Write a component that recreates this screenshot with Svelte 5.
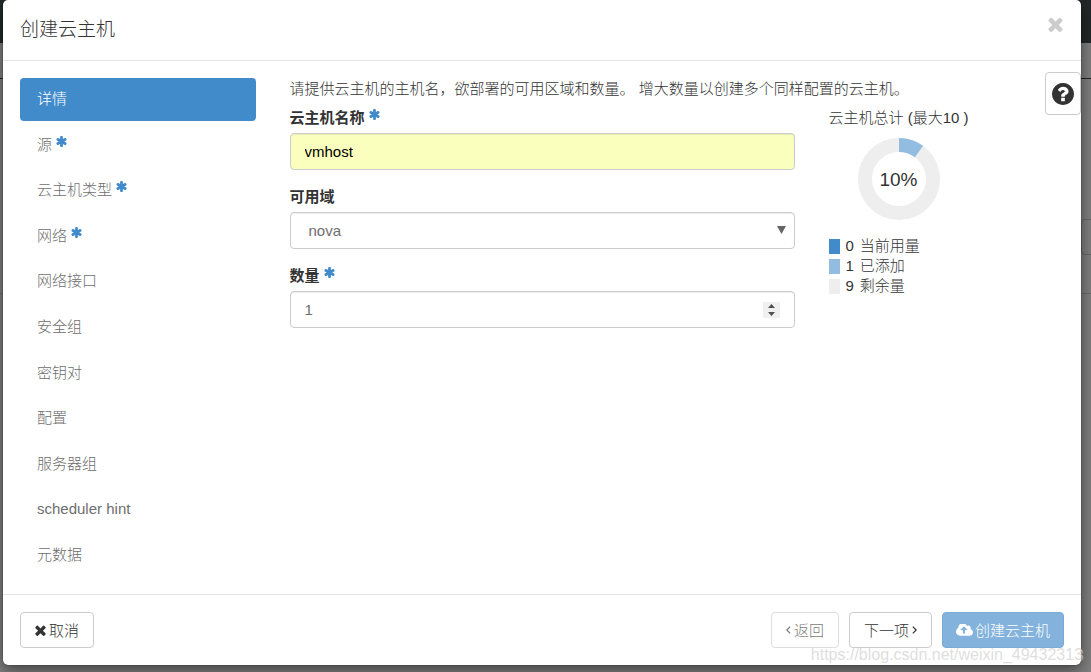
<script>
  const steps = [
    { label: "详情", required: false },
    { label: "源", required: true },
    { label: "云主机类型", required: true },
    { label: "网络", required: true },
    { label: "网络接口", required: false },
    { label: "安全组", required: false },
    { label: "密钥对", required: false },
    { label: "配置", required: false },
    { label: "服务器组", required: false },
    { label: "scheduler hint", required: false },
    { label: "元数据", required: false }
  ];

  const max = 10;
  const used = 0;

  let active = $state(0);
  let name = $state("vmhost");
  let zone = $state("nova");
  let count = $state(1);

  let added = $derived(Number(count) || 0);
  let percent = $derived(Math.round(((used + added) / max) * 100));
  let legend = $derived([
    { type: "used", value: used, label: "当前用量" },
    { type: "added", value: added, label: "已添加" },
    { type: "left", value: max - used - added, label: "剩余量" }
  ]);
</script>

{#snippet asterisk()}
  <svg class="required" viewBox="128 128 1536 1536" aria-hidden="true">
    <path d="M1546 1050q46 26 59.500 77.500t-12.500 97.500l-64 110q-26 46-77.500 59.500t-97.500-12.500l-266-153v307q0 52-38 90t-90 38h-128q-52 0-90-38t-38-90v-307l-266 153q-46 26-97.500 12.500t-77.500-59.500l-64-110q-26-46-12.500-97.500t59.500-77.500l266-154-266-154q-46-26-59.500-77.500t12.500-97.500l64-110q26-46 77.500-59.500t97.500 12.500l266 153v-307q0-52 38-90t90-38h128q52 0 90 38t38 90v307l266-153q46-26 97.500-12.500t77.500 59.500l64 110q26 46 12.500 97.500t-59.500 77.500l-266 154z" />
  </svg>
{/snippet}

{#snippet cross()}
  <svg class="cross" viewBox="302 302 1188 1252" aria-hidden="true">
    <path d="M1490 1322q0 40-28 68l-136 136q-28 28-68 28t-68-28l-294-294-294 294q-28 28-68 28t-68-28l-136-136q-28-28-28-68t28-68l294-294-294-294q-28-28-28-68t28-68l136-136q28-28 68-28t68 28l294 294 294-294q28-28 68-28t68 28l136 136q28 28 28 68t-28 68l-294 294 294 294q28 28 28 68z" />
  </svg>
{/snippet}

<div class="page">
  <div class="backdrop" aria-hidden="true">
    <div class="topbar"></div>
    <div class="subbar"></div>
    <div class="toolbar"><span></span></div>
  </div>

  <div class="modal" role="dialog" aria-labelledby="title">
    <header>
      <h1 id="title">创建云主机</h1>
      <button class="close" type="button" aria-label="关闭">{@render cross()}</button>
    </header>

    <button class="help" type="button" aria-label="帮助">
      <svg viewBox="128 128 1536 1536" aria-hidden="true">
        <path d="M1024 1376v-192q0-14-9-23t-23-9h-192q-14 0-23 9t-9 23v192q0 14 9 23t23 9h192q14 0 23-9t9-23zm256-672q0-88-55.500-163t-138.500-116-170-41q-243 0-371 213-15 24 8 42l132 100q7 6 19 6 16 0 25-12 53-68 86-92 34-24 86-24 48 0 85.500 26t37.500 59q0 38-20 61t-68 45q-63 28-115.500 86.500t-52.500 125.500v36q0 14 9 23t23 9h192q14 0 23-9t9-23q0-19 21.500-49.500t54.500-49.500q32-18 49-28.500t46-35 44.500-48 28-60.500 12.500-81zm384 192q0 209-103 385.500t-279.500 279.500-385.500 103-385.500-103-279.500-279.500-103-385.500 103-385.500 279.500-279.500 385.500-103 385.500 103 279.500 279.500 103 385.500z" />
      </svg>
    </button>

    <div class="body">
      <nav>
        {#each steps as step, i}
          <button type="button" class:active={active === i} onclick={() => (active = i)}>
            {step.label}{#if step.required}{@render asterisk()}{/if}
          </button>
        {/each}
      </nav>

      <section>
        <p>请提供云主机的主机名，欲部署的可用区域和数量。 增大数量以创建多个同样配置的云主机。</p>

        <div class="columns">
          <form>
            <label for="name">云主机名称{@render asterisk()}</label>
            <input id="name" class="filled" type="text" bind:value={name} />

            <label for="zone">可用域</label>
            <div class="field">
              <select id="zone" bind:value={zone}>
                <option value="nova">nova</option>
              </select>
              <svg class="caret" viewBox="0 0 9 8" aria-hidden="true"><path d="M0 0h9L4.500 8z" /></svg>
            </div>

            <label for="count">数量{@render asterisk()}</label>
            <div class="field">
              <input id="count" type="number" min="1" {max} bind:value={count} />
              <svg class="spinner" viewBox="0 0 17 16" aria-hidden="true">
                <path d="M5 6l3.500-4L12 6zM5 10l3.500 4L12 10z" />
              </svg>
            </div>
          </form>

          <div class="quota">
            <div class="chart">
              <div>云主机总计 (最大{max} )</div>
              <div class="donut">
                <svg viewBox="0 0 82 82" aria-hidden="true">
                  <circle class="left" cx="41" cy="41" r="34" />
                  <circle
                    class="added"
                    cx="41"
                    cy="41"
                    r="34"
                    pathLength="100"
                    stroke-dasharray="{percent} 100"
                    transform="rotate(-90 41 41)"
                  />
                </svg>
                <span>{percent}%</span>
              </div>
            </div>
            <ul>
              {#each legend as item}
                <li><i class={item.type}></i><span>{item.value}</span><span>{item.label}</span></li>
              {/each}
            </ul>
          </div>
        </div>
      </section>
    </div>

    <footer>
      <button class="btn cancel" type="button">{@render cross()}取消</button>
      <button class="btn" type="button" disabled>
        <svg class="angle" viewBox="0 0 6 10" aria-hidden="true"><path d="M5 1L1 5l4 4" /></svg>返回
      </button>
      <button class="btn" type="button">
        下一项<svg class="angle" viewBox="0 0 6 10" aria-hidden="true"><path d="M1 1l4 4-4 4" /></svg>
      </button>
      <button class="btn primary" type="button" disabled>
        <svg class="cloud" viewBox="-64 256 1920 1280" aria-hidden="true">
          <path d="M1216 864q0-14-9-23l-352-352q-9-9-23-9t-23 9l-351 351q-10 12-10 24 0 14 9 23t23 9h224v352q0 13 9.500 22.500t22.500 9.500h192q13 0 22.500-9.500t9.500-22.500v-352h224q13 0 22.500-9.500t9.500-22.500zm640 288q0 159-112.500 271.500t-271.500 112.500h-1088q-185 0-316.500-131.500t-131.500-316.500q0-130 70-240t188-165q-2-30-2-43 0-212 150-362t362-150q156 0 285.500 87t188.500 231q71-62 166-62 106 0 181 75t75 181q0 76-41 138 130 31 213.500 135.500t83.500 238.500z" />
        </svg>创建云主机
      </button>
    </footer>
  </div>

  <div class="watermark">https://blog.csdn.net/weixin_49432313</div>
</div>

<style>
  :global(body) {
    margin: 0;
  }

  .page {
    position: relative;
    display: flex;
    box-sizing: border-box;
    min-height: 100vh;
    padding: 0 10px 7px 3px;
    background: #7f7f7f;
    color: #333;
    font: 300 15px/21px "Liberation Sans", Arial, "Noto Sans CJK SC", sans-serif;
    overflow: hidden;
  }

  .backdrop {
    position: absolute;
    inset: 0;
  }

  .topbar {
    height: 43px;
    background: #222829;
  }

  .subbar {
    height: 35px;
    border-bottom: 1px solid #222;
  }

  .toolbar {
    display: flex;
    align-items: flex-end;
    height: 214px;
    border-bottom: 1px solid #6a6a6a;
  }

  .toolbar span {
    width: 24px;
    height: 34px;
    margin: 0 -16px 38px auto;
    border: 1px solid #666;
    border-radius: 4px;
  }

  button,
  input,
  select {
    font: inherit;
  }

  button {
    cursor: pointer;
  }

  svg {
    fill: currentColor;
  }

  .modal {
    position: relative;
    display: flex;
    flex: 1;
    flex-direction: column;
    min-width: 0;
    background: #fff;
    border-radius: 5px;
    box-shadow: 0 5px 15px rgba(0, 0, 0, 0.5), 0 0 1px #000;
  }

  header {
    display: flex;
    align-items: flex-start;
    justify-content: space-between;
    padding: 16px 17px 17px;
    border-bottom: 1px solid #e5e5e5;
  }

  h1 {
    margin: 0;
    font-size: 19px;
    font-weight: 300;
    line-height: 27px;
  }

  .close {
    display: flex;
    padding: 1px;
    border: 0;
    background: none;
    color: #ccc;
  }

  .close .cross {
    width: 15px;
    height: 15px;
  }

  .help {
    position: absolute;
    top: 72px;
    right: 0;
    display: flex;
    align-items: center;
    justify-content: center;
    width: 36px;
    height: 43px;
    padding: 0;
    border: 1px solid #ccc;
    border-radius: 4px;
    background: #fff;
    color: #333;
  }

  .help svg {
    width: 22px;
    height: 22px;
  }

  .body {
    display: grid;
    flex: 1;
    grid-template-columns: repeat(4, minmax(0, 1fr));
    column-gap: 34px;
    padding: 17px;
  }

  nav {
    display: flex;
    flex-direction: column;
    justify-content: space-between;
  }

  nav button {
    padding: 10px 17px 12px;
    border: 0;
    border-radius: 4px;
    background: none;
    color: #6e6e6e;
    text-align: left;
  }

  nav button.active {
    background: #428bca;
    color: #fff;
  }

  .required {
    width: 11px;
    height: 11px;
    margin-left: 4px;
    color: #428bca;
    vertical-align: 3px;
  }

  section {
    grid-column: span 3;
  }

  p {
    margin: 0 0 8px;
  }

  .columns {
    display: grid;
    grid-template-columns: repeat(3, minmax(0, 1fr));
    column-gap: 34px;
  }

  form {
    grid-column: span 2;
  }

  label {
    display: block;
    margin-bottom: 5px;
    font-weight: 700;
  }

  input,
  select {
    display: block;
    box-sizing: border-box;
    width: 100%;
    height: 37px;
    margin-bottom: 16px;
    padding: 0 14px;
    border: 1px solid #ccc;
    border-radius: 4px;
    background: #fff;
    box-shadow: inset 0 1px 1px rgba(0, 0, 0, 0.075);
    color: #6e6e6e;
  }

  input.filled {
    background: #faffbd;
    color: #000;
  }

  .field {
    position: relative;
  }

  select {
    padding: 0 18px;
    appearance: none;
  }

  .caret,
  .spinner {
    position: absolute;
    pointer-events: none;
  }

  .caret {
    top: 14px;
    right: 9px;
    width: 9px;
    height: 8px;
    color: #666;
  }

  .spinner {
    top: 11px;
    right: 15px;
    width: 17px;
    height: 16px;
    background: #f0f0f0;
    color: #505050;
  }

  .chart {
    display: inline-flex;
    flex-direction: column;
    align-items: center;
    gap: 10px;
    white-space: nowrap;
  }

  .donut {
    display: grid;
    place-items: center;
    font-size: 19px;
  }

  .donut > * {
    grid-area: 1 / 1;
  }

  .donut svg {
    width: 82px;
    height: 82px;
  }

  circle {
    fill: none;
    stroke-width: 14;
  }

  circle.left {
    stroke: #eee;
  }

  circle.added {
    stroke: #92bce0;
  }

  ul {
    margin: 16px 0 0;
    padding: 0;
    list-style: none;
  }

  li {
    display: flex;
    align-items: center;
    gap: 6px;
    line-height: 20px;
  }

  i {
    width: 11px;
    height: 15px;
  }

  i.used {
    background: #428bca;
  }

  i.added {
    background: #92bce0;
  }

  i.left {
    background: #eee;
  }

  footer {
    display: flex;
    gap: 10px;
    padding: 17px;
    border-top: 1px solid #e5e5e5;
  }

  .btn {
    display: flex;
    align-items: center;
    gap: 3px;
    height: 36px;
    padding: 0 14px;
    border: 1px solid #ccc;
    border-radius: 4px;
    background: #fff;
    color: #333;
    white-space: nowrap;
  }

  .btn:disabled {
    opacity: 0.65;
    cursor: not-allowed;
  }

  .btn.cancel {
    margin-right: auto;
  }

  .btn.primary {
    gap: 2px;
    padding: 0 13px;
    border-color: #357ebd;
    background: #428bca;
    color: #fff;
  }

  .btn .cross {
    width: 11px;
    height: 11px;
  }

  .angle {
    width: 5px;
    height: 10px;
    fill: none;
    stroke: currentColor;
    stroke-width: 1.5;
  }

  .cloud {
    width: 17px;
    height: 12px;
  }

  .watermark {
    position: absolute;
    right: 8px;
    bottom: 7px;
    color: rgba(200, 200, 200, 0.6);
    font-size: 16px;
    text-shadow: 1px 1px 0 rgba(255, 255, 255, 0.4);
    pointer-events: none;
  }
</style>
